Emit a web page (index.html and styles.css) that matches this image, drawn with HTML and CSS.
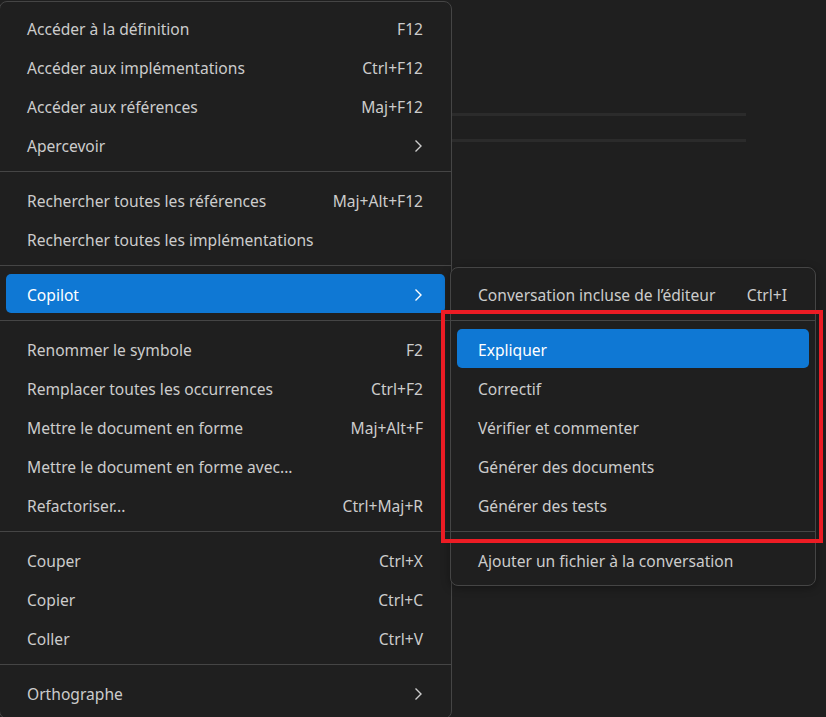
FILE: index.html
```html
<!DOCTYPE html>
<html lang="fr">
<head>
    <meta charset="UTF-8">
    <meta name="viewport" content="width=device-width, initial-scale=1.0">
    <title>Menu contextuel</title>
    <link rel="stylesheet" href="styles.css">
</head>
<body>
    <div class="editor">
        <div class="guide"></div>
        <div class="guide"></div>
    </div>

    <div class="menu menu-main">
        <div class="item"><span>Accéder à la définition</span><span class="key">F12</span></div>
        <div class="item"><span>Accéder aux implémentations</span><span class="key">Ctrl+F12</span></div>
        <div class="item"><span>Accéder aux références</span><span class="key">Maj+F12</span></div>
        <div class="item"><span>Apercevoir</span>
            <svg class="chevron" width="8" height="14" viewBox="0 0 8 14"><path d="M1.5 1.5 L7 7 L1.5 12.5"/></svg>
        </div>
        <div class="sep"></div>
        <div class="item"><span>Rechercher toutes les références</span><span class="key">Maj+Alt+F12</span></div>
        <div class="item"><span>Rechercher toutes les implémentations</span></div>
        <div class="sep"></div>
        <div class="item active"><span>Copilot</span>
            <svg class="chevron" width="8" height="14" viewBox="0 0 8 14"><path d="M1.5 1.5 L7 7 L1.5 12.5"/></svg>
        </div>
        <div class="sep"></div>
        <div class="item"><span>Renommer le symbole</span><span class="key">F2</span></div>
        <div class="item"><span>Remplacer toutes les occurrences</span><span class="key">Ctrl+F2</span></div>
        <div class="item"><span>Mettre le document en forme</span><span class="key">Maj+Alt+F</span></div>
        <div class="item"><span>Mettre le document en forme avec...</span></div>
        <div class="item"><span>Refactoriser...</span><span class="key">Ctrl+Maj+R</span></div>
        <div class="sep"></div>
        <div class="item"><span>Couper</span><span class="key">Ctrl+X</span></div>
        <div class="item"><span>Copier</span><span class="key">Ctrl+C</span></div>
        <div class="item"><span>Coller</span><span class="key">Ctrl+V</span></div>
        <div class="sep"></div>
        <div class="item"><span>Orthographe</span>
            <svg class="chevron" width="8" height="14" viewBox="0 0 8 14"><path d="M1.5 1.5 L7 7 L1.5 12.5"/></svg>
        </div>
    </div>

    <div class="menu menu-sub">
        <div class="item"><span>Conversation incluse de l’éditeur</span><span class="key">Ctrl+I</span></div>
        <div class="sep"></div>
        <div class="item active"><span>Expliquer</span></div>
        <div class="item"><span>Correctif</span></div>
        <div class="item"><span>Vérifier et commenter</span></div>
        <div class="item"><span>Générer des documents</span></div>
        <div class="item"><span>Générer des tests</span></div>
        <div class="sep"></div>
        <div class="item"><span>Ajouter un fichier à la conversation</span></div>
    </div>

    <div class="highlight-box"></div>
</body>
</html>
```

FILE: styles.css
```css
:root {
    --bg-color: #1f1f1f;
    --menu-bg: #1f1f1f;
    --border-color: #454545;
    --text-color: #cccccc;
    --active-color: #0f78d4;
    --guide-color: #2b2b2b;
    --mark-color: #ec1c24;
}
html, body {
    height: 100%;
}
body {
    margin: 0;
    background: var(--bg-color);
    color: var(--text-color);
    font-family: "Noto Sans", "Open Sans", sans-serif;
    font-size: 15.6px;
    overflow: hidden;
}
.editor {
    display: flex;
    flex-direction: column;
    gap: 23px;
    padding: 113px 0 0 452px;
}
.guide {
    width: 294px;
    height: 3px;
    background: var(--guide-color);
}

/* menus flottants */
.menu {
    position: absolute;
    box-sizing: border-box;
    background: var(--menu-bg);
    border: 1px solid var(--border-color);
    border-radius: 8px;
    padding: 6px;
}
.menu-main {
    left: -1px;
    top: 1px;
    width: 453px;
}
.menu-sub {
    left: 450px;
    top: 267px;
    width: 366px;
    box-shadow: 0 2px 8px rgba(0, 0, 0, 0.35);
}
.item {
    display: flex;
    align-items: center;
    justify-content: space-between;
    box-sizing: border-box;
    height: 39px;
    padding: 2px 22px 0 21px;
    border-radius: 5px;
    white-space: nowrap;
}
.item.active {
    background: var(--active-color);
    color: #ffffff;
}
.key {
    margin-left: 30px;
}
.chevron {
    fill: none;
    stroke: currentColor;
    stroke-width: 1.4;
    margin-right: 1px;
}
.sep {
    height: 1px;
    margin: 7px -6px 8px;
    background: var(--border-color);
}
.highlight-box {
    position: absolute;
    left: 441px;
    top: 310px;
    width: 382px;
    height: 233px;
    box-sizing: border-box;
    border: 4px solid var(--mark-color);
}
```
